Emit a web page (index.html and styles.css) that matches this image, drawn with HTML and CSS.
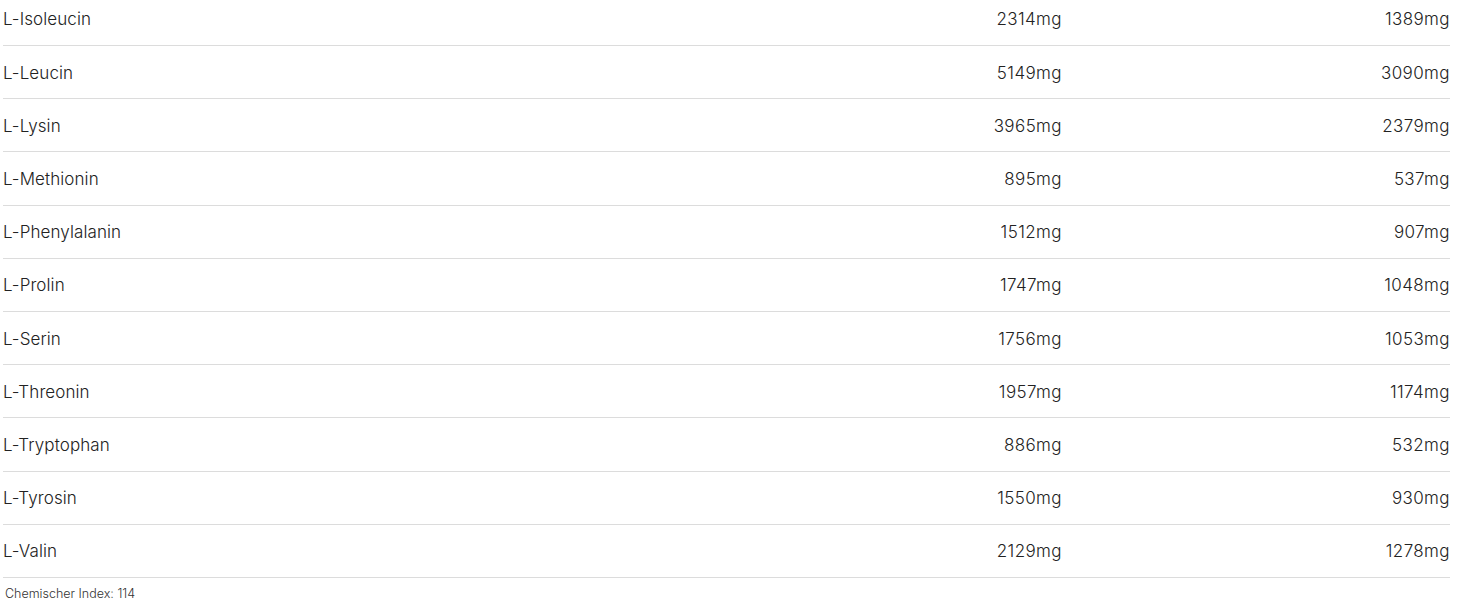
FILE: index.html
```html
<!DOCTYPE html>
<html lang="de">
<head>
<meta charset="utf-8">
<title>Aminosäuren</title>
<link rel="stylesheet" href="styles.css">
</head>
<body>
<div class="wrap">
<table class="amino">
<colgroup><col class="c-name"><col class="c-val"><col class="c-val"></colgroup>
<tbody>
<tr><td>L-Isoleucin</td><td class="num">2314mg</td><td class="num">1389mg</td></tr>
<tr><td>L-Leucin</td><td class="num">5149mg</td><td class="num">3090mg</td></tr>
<tr><td>L-Lysin</td><td class="num">3965mg</td><td class="num">2379mg</td></tr>
<tr><td>L-Methionin</td><td class="num">895mg</td><td class="num">537mg</td></tr>
<tr><td>L-Phenylalanin</td><td class="num">1512mg</td><td class="num">907mg</td></tr>
<tr><td>L-Prolin</td><td class="num">1747mg</td><td class="num">1048mg</td></tr>
<tr><td>L-Serin</td><td class="num">1756mg</td><td class="num">1053mg</td></tr>
<tr><td>L-Threonin</td><td class="num">1957mg</td><td class="num">1174mg</td></tr>
<tr><td>L-Tryptophan</td><td class="num">886mg</td><td class="num">532mg</td></tr>
<tr><td>L-Tyrosin</td><td class="num">1550mg</td><td class="num">930mg</td></tr>
<tr><td>L-Valin</td><td class="num">2129mg</td><td class="num">1278mg</td></tr>
</tbody>
</table>
<p class="note">Chemischer Index: 114</p>
</div>
</body>
</html>
```
FILE: styles.css
```css
html, body {
  margin: 0;
  padding: 0;
  background: #fff;
}
body {
  font-family: Inter, Lato, sans-serif;
  font-weight: 300;
  color: #222;
}
.wrap {
  margin: -7.2px 8px 0 3px;
  width: 1447px;
}
.amino {
  width: 100%;
  border-collapse: collapse;
  table-layout: fixed;
}
.c-name { width: auto; }
.c-val { width: 388px; }
.amino td {
  height: 51.2px;
  padding: 1px 0 0;
  font-size: 17px;
  letter-spacing: 0.1px;
  vertical-align: middle;
  border-bottom: 1px solid #dcdcdc;
  box-sizing: content-box;
}
.amino td.num {
  text-align: right;
  letter-spacing: 0.4px;
}
.note {
  margin: 8px 0 0 2px;
  font-size: 12.5px;
  color: #333;
}
```
